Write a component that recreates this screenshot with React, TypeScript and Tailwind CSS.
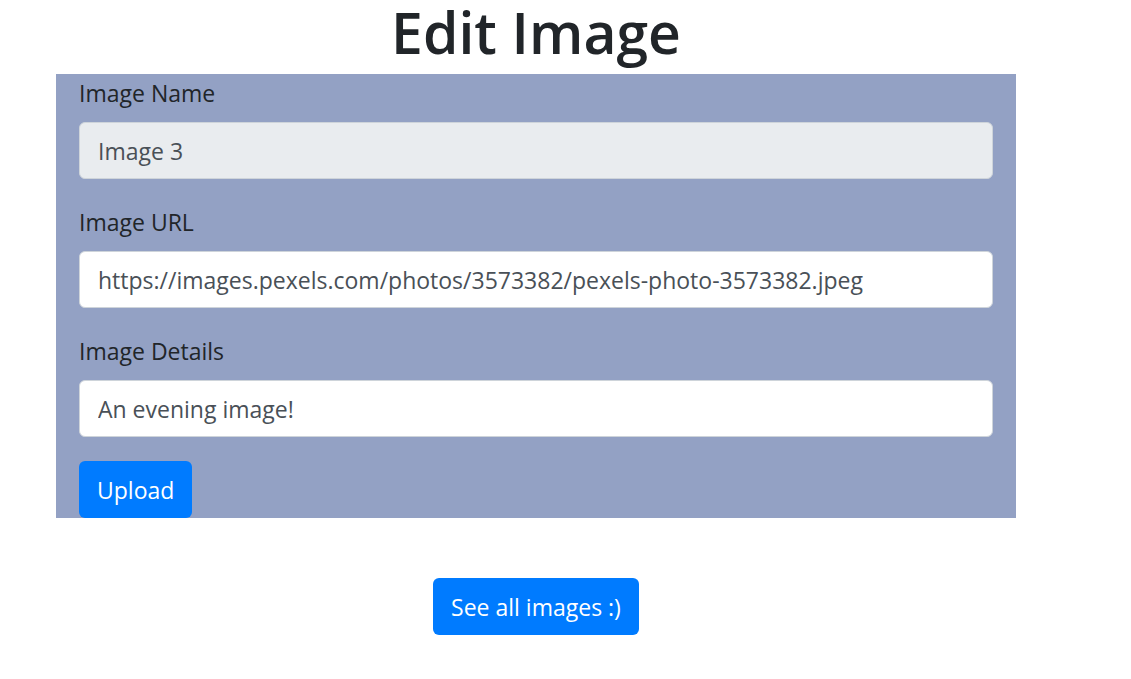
import React from "react";

export default function App() {
  return (
    <div className="min-h-[679px] w-[1131px] bg-white text-[#212529] font-['Open_Sans',sans-serif]">
      <h1 className="text-center text-[57px] leading-[64px] font-semibold w-[960px] ml-[56px] mb-[10px] text-[#212529]">
        Edit Image
      </h1>
      <div className="ml-[56px] w-[960px] bg-[#93a1c4] px-[23px]">
        <div className="mb-[24px]">
          <label className="block text-[23px] leading-[36px] mb-[12px] pt-[1px] h-[36px]">Image Name</label>
          <input
            disabled
            value="Image 3"
            readOnly
            className="block w-full h-[57px] rounded-[6px] border border-[#ced4da] bg-[#e9ecef] px-[18px] text-[23px] text-[#495057] outline-none"
          />
        </div>
        <div className="mb-[24px]">
          <label className="block text-[23px] leading-[36px] mb-[12px] pt-[1px] h-[36px]">Image URL</label>
          <input
            readOnly
            value="https://images.pexels.com/photos/3573382/pexels-photo-3573382.jpeg"
            className="block w-full h-[57px] rounded-[6px] border border-[#ced4da] bg-white px-[18px] text-[23px] text-[#495057] outline-none"
          />
        </div>
        <div className="mb-[24px]">
          <label className="block text-[23px] leading-[36px] mb-[12px] pt-[1px] h-[36px]">Image Details</label>
          <input
            readOnly
            value="An evening image!"
            className="block w-full h-[57px] rounded-[6px] border border-[#ced4da] bg-white px-[18px] text-[23px] text-[#495057] outline-none"
          />
        </div>
        <button className="h-[57px] rounded-[6px] bg-[#007bff] px-[18px] text-[23px] leading-[36px] text-white">
          Upload
        </button>
      </div>
      <div className="flex justify-center ml-[56px] w-[960px] mt-[60px]">
        <button className="h-[57px] rounded-[6px] bg-[#007bff] px-[18px] text-[23px] leading-[36px] text-white">
          See all images :)
        </button>
      </div>
    </div>
  );
}
